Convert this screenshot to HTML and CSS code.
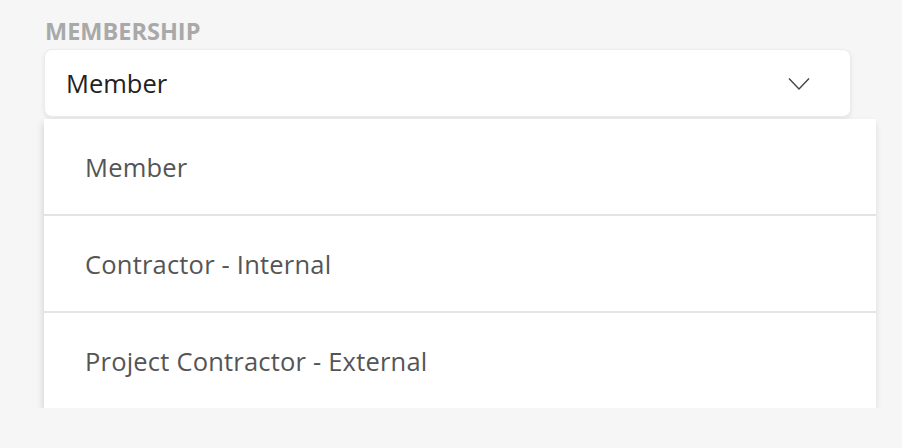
FILE: index.html
```html
<!DOCTYPE html>
<html>
<head>
<meta charset="utf-8">
<link rel="stylesheet" href="styles.css">
</head>
<body>
<div class="field">
  <div class="label">MEMBERSHIP</div>
  <div class="select">
    <span class="value">Member</span>
    <svg class="chevron" width="22" height="14" viewBox="0 0 22 14"><path d="M1 1.5 L11 12 L21 1.5" fill="none" stroke="#444" stroke-width="1.4"/></svg>
  </div>
  <ul class="menu">
    <li class="option">Member</li>
    <li class="option">Contractor - Internal</li>
    <li class="option">Project Contractor - External</li>
  </ul>
</div>
</body>
</html>
```
FILE: styles.css
```css
html, body {
  margin: 0;
  padding: 0;
  background: #f6f6f6;
  font-family: "Open Sans", sans-serif;
}
.field {
  padding: 17px 0 0 44px;
}
.label {
  font-size: 23.5px;
  font-weight: 700;
  color: #a9a9a9;
  line-height: 28px;
  padding-left: 1px;
  margin-bottom: 4px;
}
.select {
  box-sizing: border-box;
  width: 807px;
  height: 68px;
  background: #fff;
  border-radius: 8px;
  border: 1px solid #ececec;
  box-shadow: 0 2px 4px rgba(0,0,0,0.08);
  display: flex;
  align-items: center;
  justify-content: space-between;
  padding: 0 40px 0 21px;
}
.value {
  font-size: 25.5px;
  color: #222;
}
.chevron {
  display: block;
  margin-top: 2px;
}
.menu {
  list-style: none;
  margin: 2px 0 0 0;
  padding: 0;
  width: 832px;
  background: #fff;
  box-shadow: -1px 4px 7px rgba(0,0,0,0.14);
}
.option {
  height: 95px;
  display: flex;
  align-items: center;
  padding-left: 41px;
  font-size: 25.5px;
  letter-spacing: 0.2px;
  color: #555;
  border-top: 2px solid #e4e4e4;
}
.option:first-child {
  border-top: none;
}
```
